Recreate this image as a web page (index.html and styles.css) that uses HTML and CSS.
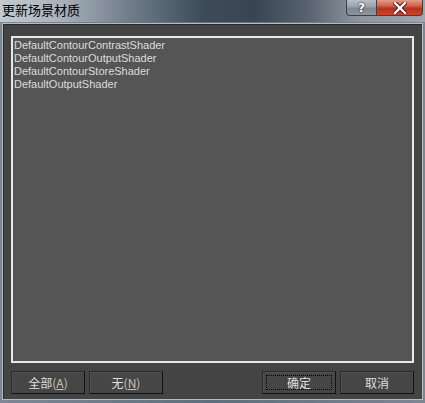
FILE: index.html
```html
<!DOCTYPE html>
<html>
<head>
<meta charset="utf-8">
<link rel="stylesheet" href="styles.css">
</head>
<body>
<div class="window">
  <div class="titlebar">
    <span class="title">更新场景材质</span>
    <div class="caption-buttons">
      <div class="cap help">?</div>
      <div class="cap close"><svg width="14" height="12" viewBox="0 0 14 12"><path d="M2 1 L12 11 M12 1 L2 11" stroke="#3a1510" stroke-width="4.2" stroke-linecap="square"/><path d="M2 1 L12 11 M12 1 L2 11" stroke="#ffffff" stroke-width="2.4" stroke-linecap="square"/></svg></div>
    </div>
  </div>
  <div class="client">
    <div class="listbox">
      <div class="item">DefaultContourContrastShader</div>
      <div class="item">DefaultContourOutputShader</div>
      <div class="item">DefaultContourStoreShader</div>
      <div class="item">DefaultOutputShader</div>
    </div>
    <div class="buttons">
      <div class="group">
        <div class="btn">全部<span class="mn">(<u>A</u>)</span></div>
        <div class="btn">无<span class="mn">(<u>N</u>)</span></div>
      </div>
      <div class="group">
        <div class="btn focus"><span class="focusrect">确定</span></div>
        <div class="btn">取消</div>
      </div>
    </div>
  </div>
</div>
</body>
</html>
```

FILE: styles.css
```css
html, body {
  margin: 0;
  padding: 0;
  background: #6f7c89;
}
.window {
  width: 425px;
  height: 403px;
  display: flex;
  flex-direction: column;
  background: linear-gradient(90deg, #7d8894 0%, #5f6d7c 50%, #7d8792 100%);
  font-family: "Noto Sans CJK SC", sans-serif;
}
.titlebar {
  height: 22px;
  display: flex;
  justify-content: space-between;
  align-items: flex-start;
  background: linear-gradient(90deg, #c3cad1 0%, #a9b2bb 14%, #6b7885 32%, #3d4a58 48%, #394553 60%, #56616d 72%, #8c959e 84%, #9ea6ae 100%);
}
.title {
  font-size: 13px;
  line-height: 20px;
  color: #000;
  padding-left: 2px;
}
.caption-buttons {
  display: flex;
  margin-right: 2px;
}
.cap {
  height: 16px;
  box-sizing: border-box;
  border: 1px solid #3b4148;
  border-top: none;
  display: flex;
  align-items: center;
  justify-content: center;
}
.help {
  width: 30px;
  border-radius: 0 0 0 4px;
  border-right: none;
  background: linear-gradient(180deg, #b7bec4 0%, #9aa2a9 45%, #7e878f 55%, #8d969d 100%);
  color: #fff;
  font-family: "DejaVu Sans", sans-serif;
  font-weight: bold;
  font-size: 12px;
  text-shadow: 0 0 2px #222, 0 0 1px #222;
}
.close {
  width: 47px;
  border-radius: 0 0 4px 0;
  background: linear-gradient(180deg, #e49a8a 0%, #d0604a 40%, #b8321e 55%, #c6462c 100%);
}
.client {
  flex: 1;
  margin: 1px 2px 3px 2px;
  border: 1px solid #b4bcc4;
  background: #444444;
  box-shadow: inset 1px 1px 0 #2a2a2a;
  display: flex;
  flex-direction: column;
  padding: 12px 8px 5px 8px;
}
.listbox {
  flex: 1;
  background: #555555;
  border: 2px solid #e4e4e4;
  border-color: #e8e8e8;
  padding: 1px 1px;
  font-family: "Liberation Sans", sans-serif;
  font-size: 11px;
  line-height: 13px;
  color: #dcdcdc;
}
.buttons {
  display: flex;
  justify-content: space-between;
  margin-top: 8px;
}
.group {
  display: flex;
  gap: 4px;
}
.btn {
  width: 74px;
  height: 23px;
  box-sizing: border-box;
  background: #464646;
  border: 1px solid #2b2b2b;
  border-right-color: #111;
  border-bottom-color: #111;
  box-shadow: inset 1px 1px 0 #505050;
  color: #dedede;
  font-size: 12px;
  display: flex;
  align-items: center;
  justify-content: center;
  line-height: 1;
}
.mn {
  color: #c8c0b8;
}
.mn u {
  text-underline-offset: 1px;
}
.btn.focus {
  padding: 3px;
}
.focusrect {
  flex: 1;
  align-self: stretch;
  border: 1px dotted #000;
  display: flex;
  align-items: center;
  justify-content: center;
}
```
